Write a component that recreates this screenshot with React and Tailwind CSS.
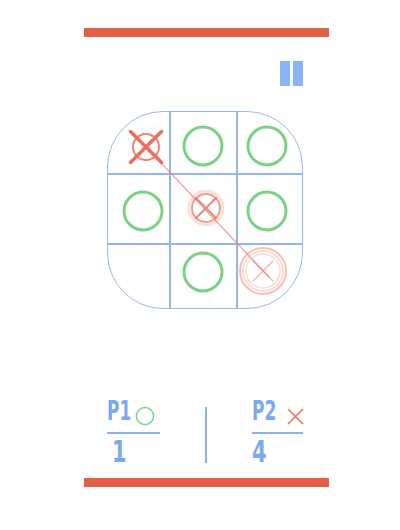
const RED = "#e8705c";
const GREEN = "#7bd285";

function Ring({ cx, cy }) {
  return <circle cx={cx} cy={cy} r="19" fill="none" stroke={GREEN} strokeWidth="3" />;
}

function Cross({ cx, cy, h, w, color = RED, opacity = 1 }) {
  return (
    <g stroke={color} strokeWidth={w} strokeLinecap="round" opacity={opacity}>
      <line x1={cx - h} y1={cy - h} x2={cx + h} y2={cy + h} />
      <line x1={cx + h} y1={cy - h} x2={cx - h} y2={cy + h} />
    </g>
  );
}

function Board() {
  const cells = [0, 1, 2, 3, 4, 5, 6, 7, 8];
  return (
    <div className="relative ml-[107px] mt-[25px] w-[196px] h-[198px]">
      <div className="w-full h-full rounded-[56px] border border-[#9bb9ec] overflow-hidden grid grid-cols-[63px_67px_64px] grid-rows-[63px_70px_63px]">
        {cells.map((i) => (
          <div
            key={i}
            className={`${i % 3 < 2 ? "border-r-2" : ""} ${i < 6 ? "border-b-2" : ""} border-[#93b5ec]`}
          />
        ))}
      </div>
      <svg className="absolute inset-0" width="196" height="198" viewBox="0 0 196 198">
        {/* win line */}
        <line x1="39" y1="36" x2="162" y2="166" stroke={RED} strokeWidth="1.2" opacity="0.65" />
        {/* top-left X */}
        <circle cx="39" cy="36" r="13" fill="none" stroke={RED} strokeWidth="2" opacity="0.85" />
        <Cross cx={39} cy={36} h={15.5} w={3.5} />
        <Ring cx={96} cy={35} />
        <Ring cx={160} cy={35} />
        <Ring cx={36} cy={100} />
        {/* center X */}
        <circle cx="99" cy="97" r="17" fill="none" stroke={RED} strokeWidth="3" opacity="0.22" />
        <circle cx="99" cy="97" r="14" fill="none" stroke={RED} strokeWidth="2" opacity="0.7" />
        <Cross cx={99} cy={97} h={10} w={2} opacity={0.8} />
        <Ring cx={160} cy={100} />
        <Ring cx={96} cy={161} />
        {/* bottom-right X */}
        <circle cx="156" cy="160" r="23" fill="none" stroke={RED} strokeWidth="2" opacity="0.45" />
        <circle cx="156" cy="160" r="20" fill="none" stroke={RED} strokeWidth="1.5" opacity="0.3" />
        <circle cx="156" cy="160" r="17" fill="none" stroke={RED} strokeWidth="1.5" opacity="0.25" />
        <Cross cx={156} cy={160} h={10} w={1.5} opacity={0.5} />
      </svg>
    </div>
  );
}

function Player({ label, score, mark }) {
  return (
    <div className="flex flex-col">
      <div className="flex items-end h-[22px]">
        <span className={`${mark === "o" ? "w-[28px]" : "w-[35px]"} shrink-0 whitespace-nowrap`}>
          <span className="inline-block origin-left scale-x-[0.7] text-[27px] leading-none font-bold text-[#7ba8ef]">
            {label}
          </span>
        </span>
        {mark === "o" ? (
          <svg width="20" height="20" viewBox="0 0 20 20" className="shrink-0 mb-[1px]">
            <circle cx="10" cy="10" r="8.6" fill="none" stroke={GREEN} strokeWidth="1.5" />
          </svg>
        ) : (
          <svg width="17" height="17" viewBox="0 0 17 17" className="shrink-0 mb-[2px]">
            <g stroke={RED} strokeWidth="1.6">
              <line x1="1" y1="1" x2="16" y2="16" />
              <line x1="16" y1="1" x2="1" y2="16" />
            </g>
          </svg>
        )}
      </div>
      <div className="h-[2px] bg-[#8eb1ea] mt-[5px]" />
      <span className={`whitespace-nowrap mt-[2px] ${mark === "o" ? "pl-[5px]" : ""}`}>
        <span className="inline-block origin-left scale-x-[0.75] text-[31px] leading-none font-bold text-[#7ba8ef]">
          {score}
        </span>
      </span>
    </div>
  );
}

export default function App() {
  return (
    <div
      className="w-[400px] h-[530px] bg-white flex flex-col"
      style={{ fontFamily: '"Liberation Sans Narrow", "DejaVu Sans Condensed", "Liberation Sans", sans-serif' }}
    >
      <div className="mt-[28px] ml-[84px] w-[245px] h-[9px] bg-[#e35f48]" />
      <div className="mt-[24px] ml-[84px] w-[245px] flex justify-end pr-[26px]">
        <div className="flex gap-[3px]">
          <div className="w-[10px] h-[25px] bg-[#8ab4f8]" />
          <div className="w-[10px] h-[25px] bg-[#8ab4f8]" />
        </div>
      </div>
      <Board />
      <div className="mt-[96px] ml-[107px] w-[196px] flex justify-between items-start">
        <div className="w-[53px]">
          <Player label="P1" score="1" mark="o" />
        </div>
        <div className="w-[2px] h-[56px] mt-[2px] bg-[#8eb1ea]" />
        <div className="w-[51px]">
          <Player label="P2" score="4" mark="x" />
        </div>
      </div>
      <div className="mt-[9px] ml-[84px] w-[245px] h-[9px] bg-[#e35f48]" />
    </div>
  );
}
